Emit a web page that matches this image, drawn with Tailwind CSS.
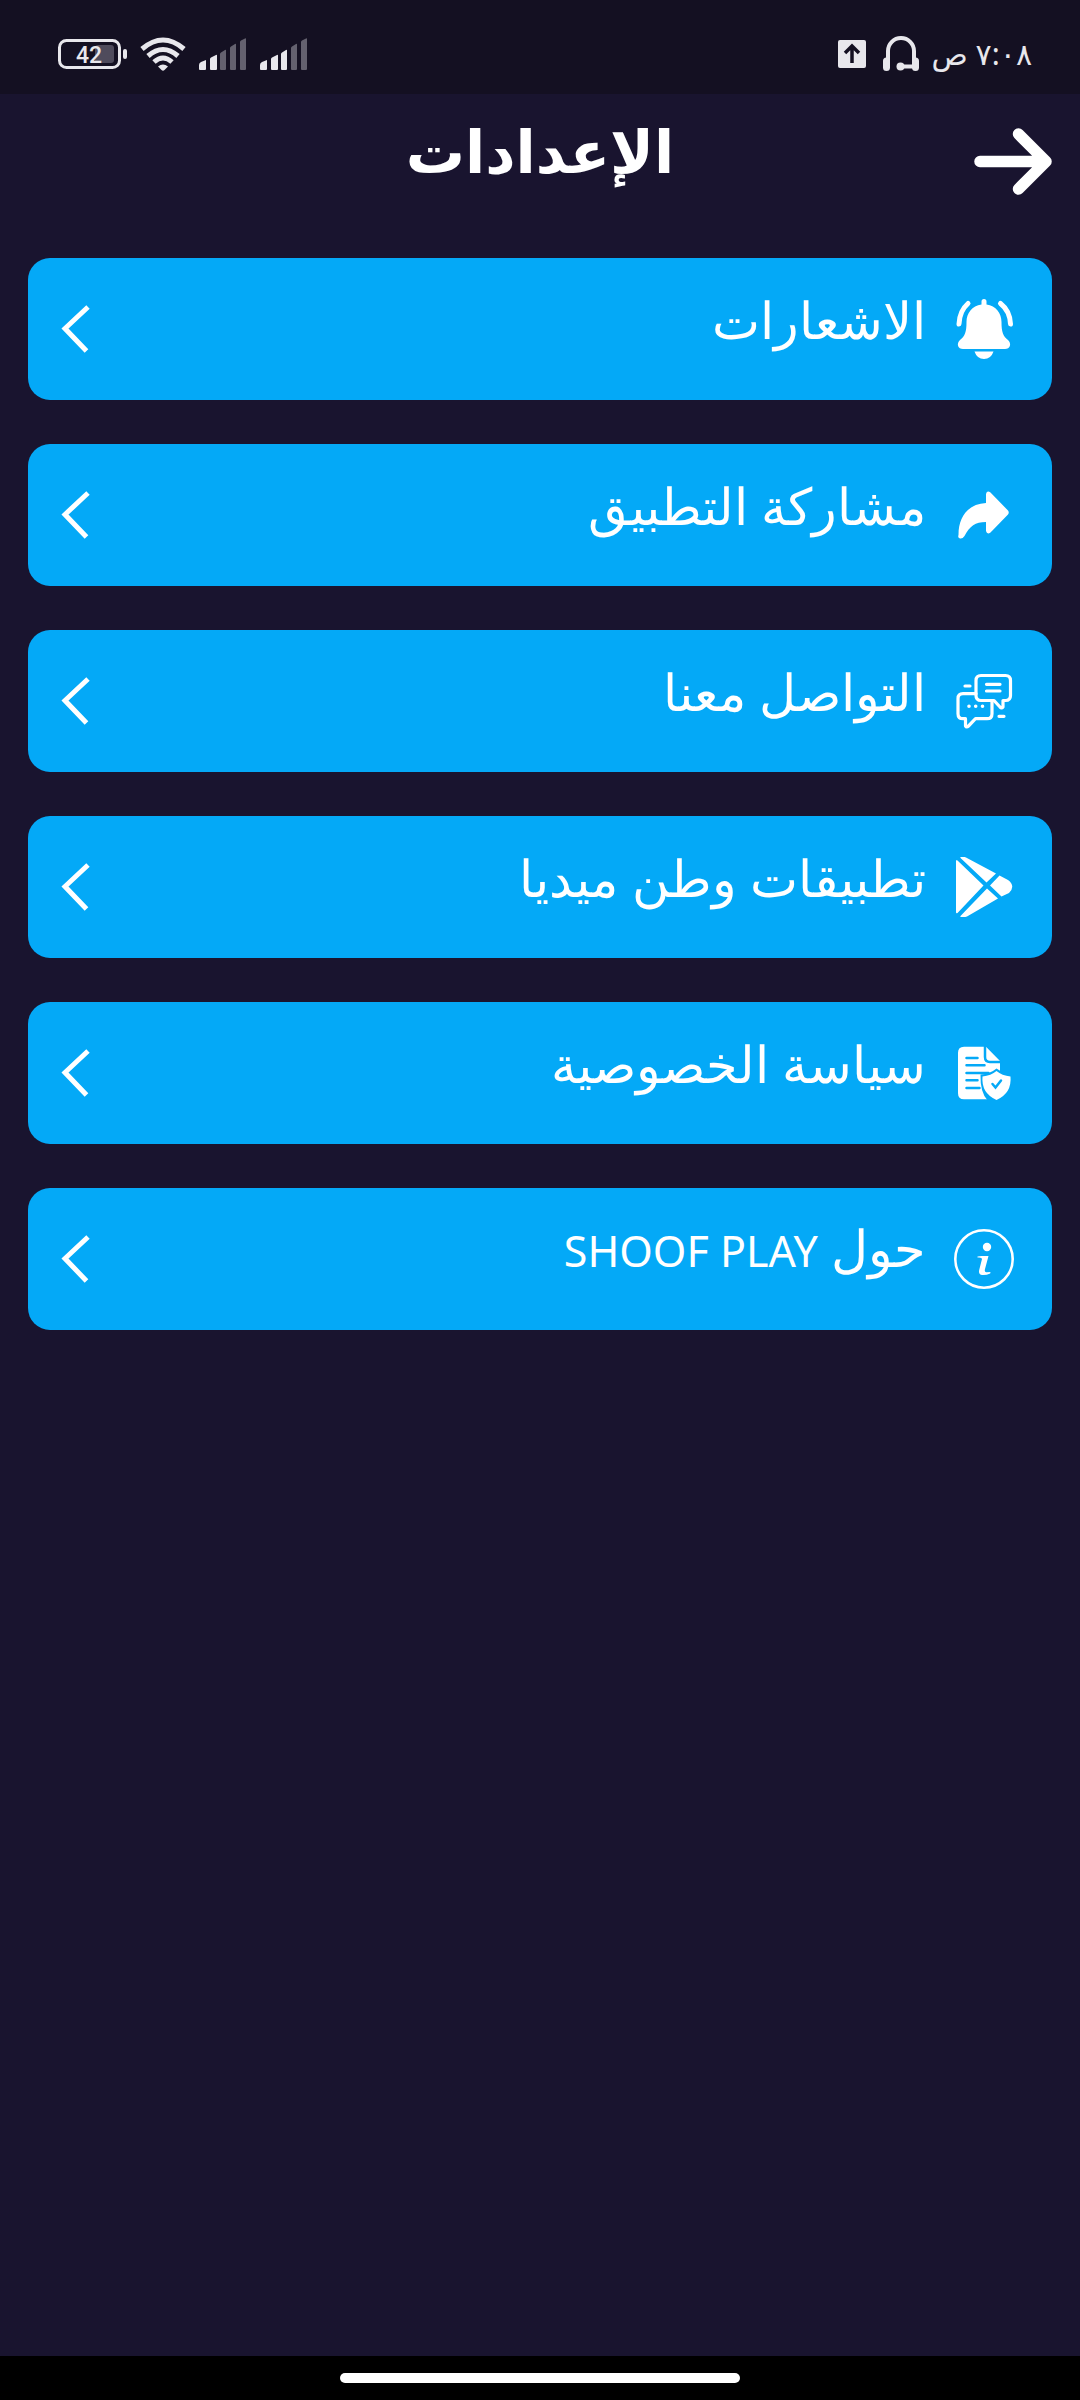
<!DOCTYPE html>
<html lang="ar" dir="rtl">
<head>
<meta charset="utf-8">
<meta name="viewport" content="width=device-width, initial-scale=1">
<title>الإعدادات</title>
<script src="https://cdn.jsdelivr.net/npm/@tailwindcss/browser@4"></script>
</head>
<body class="flex min-h-screen flex-col bg-[#19142f] font-['Noto_Sans','DejaVu_Sans',sans-serif] text-white">

<!-- Status bar -->
<div class="flex h-[94px] items-center justify-between bg-[#141022] pt-[14px] pr-12 pl-[58px] text-[#e8e7ec]">
  <div class="flex items-center gap-3">
    <span class="text-[30px] leading-8">٧:٠٨ ص</span>
    <svg class="h-[38px] w-[38px]" viewBox="0 0 38 38" fill="none" stroke="currentColor" stroke-width="4">
      <path d="M6 28V16a13 13 0 0 1 26 0V28M19 31.500H33" />
      <path d="M4.500 26v6.500M33.500 26v6.500" stroke-width="7" stroke-linecap="round" />
      <circle cx="18.500" cy="31.500" r="4" fill="currentColor" stroke="none" />
    </svg>
    <svg class="mr-1 h-7 w-7" viewBox="0 0 28 28">
      <rect width="28" height="28" rx="2" fill="currentColor" />
      <path d="M14 23V6M7 13l7-7 7 7" fill="none" stroke="#141022" stroke-width="3.500" />
    </svg>
  </div>
  <div class="flex items-center gap-[13px]">
    <svg class="h-8 w-12" viewBox="0 0 48 32" fill="currentColor">
      <path d="M0 31v-4q0-2 2-3l5-2v9q0 1-1 1H1q-1 0-1-1zM11 31V21q0-1 1-1.500l5-2.500q1-.5 1 .5V31q0 1-1 1h-5q-1 0-1-1zM21 31V16q0-1 1-1.500l4-2.500q1-.5 1 .5V31q0 1-1 1h-4q-1 0-1-1z" />
      <path opacity=".38" d="M31 31V10q0-1 1-1.500l4-2.500q1-.5 1 .5V31q0 1-1 1h-4q-1 0-1-1zM41 31V4q0-1 1-1.500l4-2q1-.5 1 .5V31q0 1-1 1h-4q-1 0-1-1z" />
    </svg>
    <svg class="h-8 w-12" viewBox="0 0 48 32" fill="currentColor">
      <path d="M0 31v-4q0-2 2-3l5-2v9q0 1-1 1H1q-1 0-1-1zM11 31V21q0-1 1-1.500l5-2.500q1-.5 1 .5V31q0 1-1 1h-5q-1 0-1-1z" />
      <path opacity=".38" d="M21 31V16q0-1 1-1.500l4-2.500q1-.5 1 .5V31q0 1-1 1h-4q-1 0-1-1zM31 31V10q0-1 1-1.500l4-2.500q1-.5 1 .5V31q0 1-1 1h-4q-1 0-1-1zM41 31V4q0-1 1-1.500l4-2q1-.5 1 .5V31q0 1-1 1h-4q-1 0-1-1z" />
    </svg>
    <svg class="h-[34px] w-[46px]" viewBox="0 0 46 34" fill="none" stroke="currentColor" stroke-width="5">
      <path d="M2 12Q23-6 44 12M8 19q15-13 30 0M14 25q9-8 18 0" />
      <path d="M18 29.500q5-4 10 0L24.500 33q-1.500 1.500-3 0z" fill="currentColor" stroke="none" />
    </svg>
    <svg class="h-[30px] w-[69px]" viewBox="0 0 69 30" fill="none">
      <rect x="37" y="6" width="19" height="18" rx="3" fill="#4f4b5c" />
      <rect x="1.500" y="1.500" width="60" height="27" rx="7" stroke="currentColor" stroke-width="3" />
      <rect x="65" y="10" width="4" height="10" rx="2" fill="currentColor" />
      <text x="31" y="23.500" text-anchor="middle" direction="ltr" fill="currentColor" class="font-[Roboto] text-[23px] font-medium">42</text>
    </svg>
  </div>
</div>

<!-- Header -->
<header class="grid h-[164px] grid-cols-[78px_1fr_78px] items-start px-7 pt-[34px]">
  <button type="button" aria-label="رجوع" class="cursor-pointer">
    <svg class="h-[67px] w-[78px]" viewBox="0 0 78 67" fill="none" stroke="currentColor" stroke-width="11.500" stroke-linecap="round" stroke-linejoin="round">
      <path d="M6 33.500H71M44.500 6L72 33.500 44.500 61" />
    </svg>
  </button>
  <h1 class="text-center text-[59px] leading-[44px] font-bold">الإعدادات</h1>
</header>

<!-- Settings list -->
<main class="grow px-7">
  <ul class="flex flex-col gap-11">
    <li>
      <a href="#notifications" class="flex h-[142px] items-center rounded-[22px] bg-[#04a9f7] pr-[38px] pl-8">
        <svg class="h-[60px] w-[60px]" viewBox="0 0 60 60" fill="currentColor">
          <path d="M27.500 5.500V2.500a2.500 2.500 0 0 1 5 0v3C42 7 47.500 14 47.500 23c0 10 1.500 14 6.500 18 4 4 2 9-3 9H9c-5 0-7-5-3-9 5-4 6.500-8 6.500-18C12.500 14 18 7 27.500 5.500zM20.500 52.500h19Q37 60 30 60t-9.500-7.500z" />
          <path d="M14 4.500Q5.500 12 5 25M46.500 4.500Q56 12 56.500 25" fill="none" stroke="currentColor" stroke-width="5" stroke-linecap="round" />
        </svg>
        <span class="mr-7 grow pb-5 text-[51px] leading-[60px] font-light">الاشعارات</span>
        <svg class="h-12 w-[30px]" viewBox="0 0 30 48" fill="none" stroke="currentColor" stroke-width="5"><path d="M28 2L5 23.500 26.500 46" /></svg>
      </a>
    </li>
    <li>
      <a href="#share" class="flex h-[142px] items-center rounded-[22px] bg-[#04a9f7] pr-[38px] pl-8">
        <svg class="h-[60px] w-[60px]" viewBox="0 0 60 60" fill="currentColor">
          <path d="M32 18V9q1-4 4.500-1.500L54 25.500q1.500 2 0 4L36.500 47.500q-3.500 2.500-4.500-1.500V37C21 37 16 41 10.500 51q-2 3-4.500 2.500T4.500 50C4.500 31 14.500 19 32 18z" />
        </svg>
        <span class="mr-7 grow pb-5 text-[51px] leading-[60px] font-light">مشاركة التطبيق</span>
        <svg class="h-12 w-[30px]" viewBox="0 0 30 48" fill="none" stroke="currentColor" stroke-width="5"><path d="M28 2L5 23.500 26.500 46" /></svg>
      </a>
    </li>
    <li>
      <a href="#contact" class="flex h-[142px] items-center rounded-[22px] bg-[#04a9f7] pr-[38px] pl-8">
        <svg class="h-[60px] w-[60px]" viewBox="0 0 60 60" fill="none" stroke="currentColor" stroke-width="3.200" stroke-linecap="round" stroke-linejoin="round">
          <path d="M27 4.500h24.500q5 0 5 5v15q0 5-5 5H49v6.500q-1.500 2-3 0l-6-6.500H27q-5 0-5-5v-15q0-5 5-5z" />
          <path d="M22 22.700H9q-5 0-5 5v15q0 5 5 5h2.500V55q1 2 3 0l7-7.300H33q5 0 5-5V29.500M11 15h5M45 45.300h5" />
          <path d="M32.500 13.300h13.500M32.500 20h13.500" />
          <path d="M15 35.300h.01M21.700 35.300h.01M28.500 35.300h.01" stroke-width="3.600" />
        </svg>
        <span class="mr-7 grow pb-5 text-[51px] leading-[60px] font-light">التواصل معنا</span>
        <svg class="h-12 w-[30px]" viewBox="0 0 30 48" fill="none" stroke="currentColor" stroke-width="5"><path d="M28 2L5 23.500 26.500 46" /></svg>
      </a>
    </li>
    <li>
      <a href="#apps" class="flex h-[142px] items-center rounded-[22px] bg-[#04a9f7] pr-[38px] pl-8">
        <svg class="h-[60px] w-[60px]" viewBox="0 0 60 60" fill="currentColor">
          <path d="M2 4.500Q2 2 3.500 3.500L29.500 28.500 3.500 56Q2 57 2 55zM6 .5Q9-1 12 .5L42 16.500 32.500 25.500zM6 59.500L33 31.500 44 41.500 13 59.500Q9 61 6 59.500zM45.500 18.500L54 23q8 6 1 13L47.500 39.500 36 28.500z" />
        </svg>
        <span class="mr-7 grow pb-5 text-[51px] leading-[60px] font-light">تطبيقات وطن ميديا</span>
        <svg class="h-12 w-[30px]" viewBox="0 0 30 48" fill="none" stroke="currentColor" stroke-width="5"><path d="M28 2L5 23.500 26.500 46" /></svg>
      </a>
    </li>
    <li>
      <a href="#privacy" class="flex h-[142px] items-center rounded-[22px] bg-[#04a9f7] pr-[38px] pl-8">
        <svg class="h-[60px] w-[60px]" viewBox="0 0 60 60" fill="none" stroke="#04a9f7" stroke-width="2.500" stroke-linecap="round">
          <path d="M10 3.700H32L46 18V56.300H10q-6 0-6-6V9.700q0-6 6-6z" fill="#fff" stroke="none" />
          <path d="M31 3V14q0 5 5 5H47M12.500 15h11M12.500 22.300h18M12.500 30h22M12.500 37.300h11M12.500 45h13" />
          <path d="M34 58Q26 50 26.500 31.500 36 31 42.500 25.500L48 29V58z" fill="#04a9f7" stroke="none" />
          <path d="M42.500 28Q48 32.500 56.500 33.500 58 50 42.500 57 27 50 28.500 33.500 37 32.500 42.500 28z" fill="#fff" stroke="none" />
          <path d="M38.500 41l3 3.500 5.500-7" />
        </svg>
        <span class="mr-7 grow pb-5 text-[51px] leading-[60px] font-light">سياسة الخصوصية</span>
        <svg class="h-12 w-[30px]" viewBox="0 0 30 48" fill="none" stroke="currentColor" stroke-width="5"><path d="M28 2L5 23.500 26.500 46" /></svg>
      </a>
    </li>
    <li>
      <a href="#about" class="flex h-[142px] items-center rounded-[22px] bg-[#04a9f7] pr-[38px] pl-8">
        <svg class="h-[60px] w-[60px]" viewBox="0 0 60 60" fill="none" stroke="currentColor">
          <circle cx="30" cy="30" r="28.700" stroke-width="2.600" />
          <circle cx="33" cy="18" r="4.200" fill="currentColor" stroke="none" />
          <path d="M23.500 27.500l4-.5h7L31 40q-.8 3.500 1.500 3.300L36.500 43l-.3 1.500q-4 1.800-8 1.500-4-.5-3-5L28 30q0-2-4.500-1.500z" fill="currentColor" stroke="none" />
        </svg>
        <span class="mr-7 grow pb-5 text-[51px] leading-[60px] font-light">حول <bdi class="text-[43px] font-normal">SHOOF PLAY</bdi></span>
        <svg class="h-12 w-[30px]" viewBox="0 0 30 48" fill="none" stroke="currentColor" stroke-width="5"><path d="M28 2L5 23.500 26.500 46" /></svg>
      </a>
    </li>
  </ul>
</main>

<!-- Gesture bar -->
<div class="flex h-11 items-center justify-center bg-black">
  <div class="h-[10px] w-[37%] rounded-full bg-white"></div>
</div>
</body>
</html>
